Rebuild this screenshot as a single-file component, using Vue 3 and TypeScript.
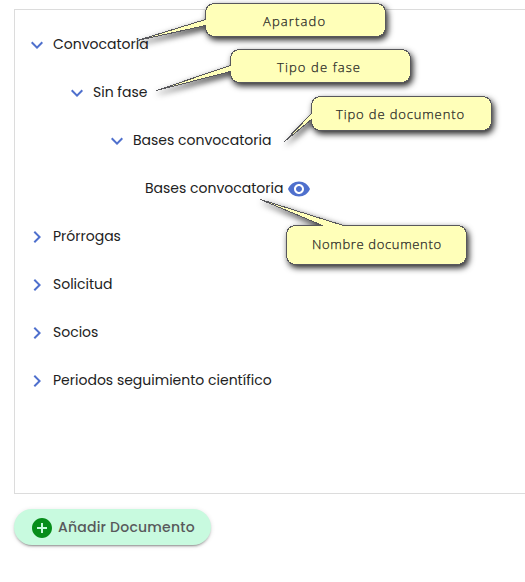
<script setup lang="ts">
interface TreeNode {
  label: string
  level: number
  state: 'open' | 'closed' | 'leaf'
}

interface Callout {
  label: string
  textX: number
  textY: number
  width: number
  path: string
}

const nodes: TreeNode[] = [
  { label: 'Convocatoria', level: 0, state: 'open' },
  { label: 'Sin fase', level: 1, state: 'open' },
  { label: 'Bases convocatoria', level: 2, state: 'open' },
  { label: 'Bases convocatoria', level: 3, state: 'leaf' },
  { label: 'Prórrogas', level: 0, state: 'closed' },
  { label: 'Solicitud', level: 0, state: 'closed' },
  { label: 'Socios', level: 0, state: 'closed' },
  { label: 'Periodos seguimiento científico', level: 0, state: 'closed' },
]

const callouts: Callout[] = [
  {
    label: 'Apartado', textX: 263, textY: 26, width: 62,
    path: 'M215.5 3.5H375.5Q385.5 3.5 385.5 13.5V26.5Q385.5 36.5 375.5 36.5H215.5Q205.5 36.5 205.5 26.5L205.5 25.5L137.5 40.5L205.5 19.5V13.5Q205.5 3.5 215.5 3.5Z',
  },
  {
    label: 'Tipo de fase', textX: 277, textY: 72, width: 83,
    path: 'M240.5 49.5H400.5Q410.5 49.5 410.5 59.5V72.5Q410.5 82.5 400.5 82.5H240.5Q230.5 82.5 230.5 72.5L230.5 71.5L156.5 90.5L230.5 65.5V59.5Q230.5 49.5 240.5 49.5Z',
  },
  {
    label: 'Tipo de documento', textX: 336, textY: 119, width: 128,
    path: 'M321.5 96.5H481.5Q491.5 96.5 491.5 106.5V120.5Q491.5 130.5 481.5 130.5H321.5Q311.5 130.5 311.5 120.5L311.5 119.5L284.5 141.5L311.5 113.5V106.5Q311.5 96.5 321.5 96.5Z',
  },
  {
    label: 'Nombre documento', textX: 312, textY: 249, width: 129,
    path: 'M296.5 225.5H322.5L260.5 199.5L343.5 225.5H456.5Q466.5 225.5 466.5 235.5V254.5Q466.5 264.5 456.5 264.5H296.5Q286.5 264.5 286.5 254.5V235.5Q286.5 225.5 296.5 225.5Z',
  },
]
</script>

<template>
  <main class="page">
    <section class="panel">
      <div v-for="(node, i) in nodes" :key="i" class="row" :class="'level-' + node.level">
        <svg v-if="node.state === 'open'" class="icon" viewBox="0 0 24 24">
          <path d="M16.59 8.59L12 13.17 7.41 8.59 6 10l6 6 6-6z" />
        </svg>
        <svg v-else-if="node.state === 'closed'" class="icon" viewBox="0 0 24 24">
          <path d="M10 6L8.59 7.41 13.17 12l-4.58 4.59L10 18l6-6z" />
        </svg>
        <span class="label">{{ node.label }}</span>
        <svg v-if="node.state === 'leaf'" class="icon" viewBox="0 0 24 24">
          <path d="M12 4.5C7 4.5 2.73 7.61 1 12c1.73 4.39 6 7.5 11 7.5s9.27-3.11 11-7.5c-1.73-4.39-6-7.5-11-7.5zM12 17c-2.76 0-5-2.24-5-5s2.24-5 5-5 5 2.24 5 5-2.24 5-5 5zm0-8c-1.66 0-3 1.34-3 3s1.34 3 3 3 3-1.34 3-3-1.34-3-3-3z" />
        </svg>
      </div>
    </section>
    <button class="add" type="button">
      <svg class="add-icon" viewBox="0 0 24 24">
        <path d="M12 2C6.48 2 2 6.48 2 12s4.48 10 10 10 10-4.48 10-10S17.52 2 12 2zm5 11h-4v4h-2v-4H7v-2h4V7h2v4h4v2z" />
      </svg>
      <span class="add-label">Añadir Documento</span>
    </button>
    <svg class="callouts" viewBox="0 0 525 582">
      <g v-for="c in callouts" :key="c.label">
        <path class="bubble" :d="c.path" />
        <text :x="c.textX" :y="c.textY" :textLength="c.width">{{ c.label }}</text>
      </g>
    </svg>
  </main>
</template>

<style>
body {
  background: #fff;
}
</style>

<style scoped>
.page {
  position: relative;
  box-sizing: border-box;
  width: 525px;
  height: 582px;
  padding: 9px 0 0 14px;
  overflow: hidden;
  font-family: Poppins, Inter, sans-serif;
}
.panel {
  box-sizing: border-box;
  height: 485px;
  padding: 10px 0 0 10px;
  border: 1px solid #dcdcdc;
  border-right: 0;
}
.row {
  display: flex;
  align-items: center;
  height: 48px;
}
.level-1 {
  padding-left: 40px;
}
.level-2 {
  padding-left: 80px;
}
.level-3 {
  padding-left: 120px;
}
.icon {
  flex: none;
  width: 24px;
  height: 24px;
  margin-top: 2px;
  fill: #4f70cd;
}
.label {
  margin-left: 4px;
  color: #212121;
  font-size: 14px;
  line-height: 20px;
  white-space: nowrap;
}
.level-3 .label {
  margin-left: 0;
  margin-right: 4px;
}
.add {
  display: flex;
  align-items: center;
  width: 197px;
  height: 36px;
  margin-top: 15px;
  padding: 0 16px;
  border: 0;
  border-radius: 18px;
  background: #c8fadf;
  box-shadow: 0 3px 1px -2px rgba(0, 0, 0, 0.2), 0 2px 2px 0 rgba(0, 0, 0, 0.14), 0 1px 5px 0 rgba(0, 0, 0, 0.12);
  font-family: inherit;
}
.add-icon {
  flex: none;
  width: 24px;
  height: 24px;
  margin: 2px 4px 0 0;
  fill: #078d1b;
}
.add-label {
  color: #58595b;
  font-size: 14px;
  font-weight: 500;
  letter-spacing: 0.22px;
  white-space: nowrap;
}
.callouts {
  position: absolute;
  top: 0;
  left: 0;
  width: 525px;
  height: 582px;
  pointer-events: none;
}
.bubble {
  fill: #ffffb9;
  stroke: #58585c;
  stroke-width: 1;
  shape-rendering: crispEdges;
  filter: drop-shadow(2px 3px 3px rgba(0, 0, 0, 0.85));
}
.callouts text {
  fill: #25251f;
  stroke: #25251f;
  stroke-width: 0.25px;
  font-family: "Open Sans", "Noto Sans", sans-serif;
  font-size: 13px;
  font-weight: 300;
}
</style>
